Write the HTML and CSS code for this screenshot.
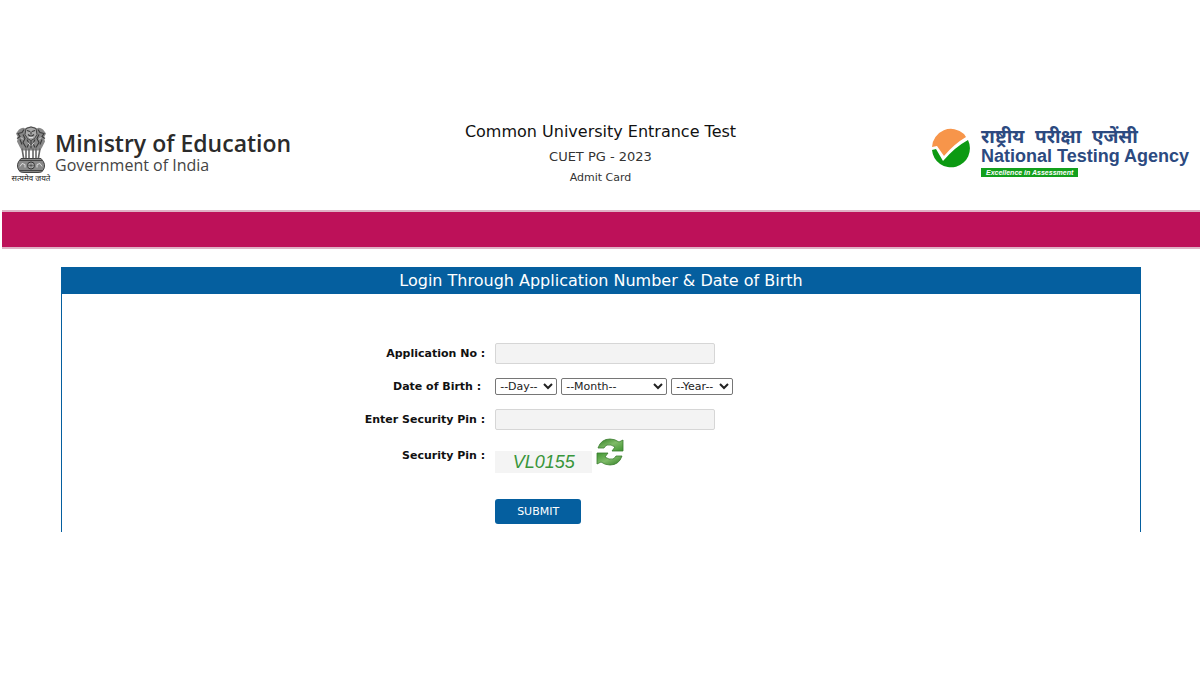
FILE: index.html
```html
<!DOCTYPE html>
<html lang="en">
<head>
    <meta charset="UTF-8">
    <meta name="viewport" content="width=device-width, initial-scale=1.0">
    <title>CUET PG - 2023 Admit Card</title>
    <link rel="stylesheet" href="styles.css">
</head>
<body>
    <header class="site-header">
        <div class="ministry">
            <div class="emblem">
                <svg width="32" height="49" viewBox="0 0 32 48" aria-hidden="true">
                    <!-- lions -->
                    <path d="M10 3 Q16 -1 22 3 Q24 1 28 4 L31 8 L29 12 L30 16 L27 22 L25 25 H7 L5 22 L2 16 L3 12 L1 8 L4 4 Q8 1 10 3Z" fill="#888"/>
                    <path d="M11 3 Q16 0 21 3 L22 9 Q20 14 16 15 Q12 14 10 9Z" fill="#aaa" stroke="#444"/>
                    <path d="M12 5 L15 6 M17 6 L20 5 M13 9 Q16 12 19 9 M16 6 V9 M9 4 L7 7 L3 8 L5 11 L2 13 M23 4 L25 7 L29 8 L27 11 L30 13 M8 9 L10 13 L8 17 L11 22 M24 9 L22 13 L24 17 L21 22 M12 14 L14 18 L12 22 M20 14 L18 18 L20 22 M16 15 V23 M5 14 L7 19 M27 14 L25 19" fill="none" stroke="#3a3a3a" stroke-width="1.1"/>
                    <path d="M6 12 L8 14 M24 14 L26 12 M14 12 L18 12 M13 17 L15 20 M19 17 L17 20" stroke="#ddd" stroke-width="1"/>
                    <!-- legs -->
                    <path d="M7 23 L9 35 M11 23 V35 M14 23 V35 M18 23 V35 M21 23 V35 M25 23 L23 35" stroke="#666" stroke-width="1.6"/>
                    <!-- abacus with the wheel -->
                    <path d="M6 33 H26 Q32 39 28 45 Q27 47 23 47 H9 Q5 47 4 45 Q0 39 6 33Z" fill="#888" stroke="#444"/>
                    <path d="M5 35 H27 M4 45 H28" stroke="#444"/>
                    <circle cx="16" cy="40" r="3.5" fill="#bbb" stroke="#333"/>
                    <path d="M16 37 V43 M13 40 H19 M14 38 L18 42 M18 38 L14 42" stroke="#444" stroke-width=".6"/>
                    <path d="M5 41 L7 38 L10 39 L10 42 M27 41 L25 38 L22 39 L22 42" fill="none" stroke="#ddd"/>
                </svg>
                <span class="motto" lang="hi">सत्यमेव जयते</span>
            </div>
            <div class="ministry-text">
                <div class="ministry-name">Ministry of Education</div>
                <div class="ministry-sub">Government of India</div>
            </div>
        </div>

        <div class="exam">
            <h1>Common University Entrance Test</h1>
            <h2>CUET PG - 2023</h2>
            <h3>Admit Card</h3>
        </div>

        <div class="agency">
            <svg width="40" height="40" viewBox="0 0 40 40" aria-hidden="true">
                <path d="M1 19 A19 19 0 0 1 33 6 L35 9 Q23 16 13 28 L6 18Z" fill="#f7954a"/>
                <path d="M1 22 L5 21 L12 33 Q24 19 37 12 A19 19 0 1 1 1 22Z" fill="#0c9a12"/>
            </svg>
            <div class="agency-text">
                <div class="agency-hindi" lang="hi">राष्ट्रीय &nbsp;परीक्षा &nbsp;एजेंसी</div>
                <div class="agency-name">National Testing Agency</div>
                <div class="agency-tag">Excellence in Assessment</div>
            </div>
        </div>
    </header>

    <div class="band"></div>

    <main class="panel">
        <h2 class="panel-title">Login Through Application Number &amp; Date of Birth</h2>
        <form class="login-form">
            <label for="appno">Application No :</label>
            <div class="field">
                <input type="text" id="appno">
            </div>

            <label for="day" class="dob-label">Date of Birth :</label>
            <div class="field">
                <select id="day" class="day"><option>--Day--</option></select>
                <select class="month" aria-label="Month"><option>--Month--</option></select>
                <select class="year" aria-label="Year"><option>--Year--</option></select>
            </div>

            <label for="pin">Enter Security Pin :</label>
            <div class="field">
                <input type="text" id="pin">
            </div>

            <div class="pin-label">Security Pin :</div>
            <div class="field captcha-row">
                <div class="captcha">VL0155</div>
                <button type="button" class="refresh" aria-label="Refresh security pin">
                    <svg width="28" height="28" viewBox="0 0 28 28">
                        <defs>
                            <linearGradient id="leaf" x1="0" y1="0" x2="1" y2="1">
                                <stop offset="0" stop-color="#2f7d22"/>
                                <stop offset=".5" stop-color="#7fbb68"/>
                                <stop offset="1" stop-color="#3f9431"/>
                            </linearGradient>
                        </defs>
                        <path id="arrow" d="M2 10 Q5 1 14 1 Q19 1 23 4 L27 2 V13 H16 L19 9 Q15 6 11 7 Q9 8 8 10Z" fill="url(#leaf)" stroke="#397b2d" stroke-width=".8"/>
                        <use href="#arrow" transform="rotate(180 14 14)"/>
                    </svg>
                </button>
            </div>

            <div class="field submit-row">
                <button type="submit" class="submit">SUBMIT</button>
            </div>
        </form>
    </main>
</body>
</html>
```

FILE: styles.css
```css
* {
    margin: 0;
    padding: 0;
    box-sizing: border-box;
}

body {
    background: #fff;
    color: #111;
    font-family: Verdana, "DejaVu Sans", sans-serif;
    font-size: 11px;
    padding: 112px 0 0 2px;
}

/* Header */
.site-header {
    display: grid;
    grid-template-columns: 1fr auto 1fr;
    align-items: start;
    min-height: 98px;
    padding: 10px 10px 0 9px;
}

.ministry {
    display: flex;
    gap: 4px;
    padding-top: 3px;
}

.emblem {
    display: flex;
    flex-direction: column;
    align-items: center;
    width: 40px;
}

.motto {
    font-family: "Noto Sans Devanagari", "Noto Sans", sans-serif;
    font-size: 8px;
    line-height: 10px;
    white-space: nowrap;
    color: #222;
}

.ministry-text {
    font-family: "Open Sans", "Noto Sans", sans-serif;
    padding-top: 5px;
    white-space: nowrap;
}

.ministry-name {
    font-size: 23px;
    font-weight: 600;
    line-height: 26px;
    color: #2b2b2b;
}

.ministry-sub {
    font-size: 16px;
    line-height: 18px;
    color: #444;
}

.exam {
    text-align: center;
}

.exam h1,
.exam h2,
.exam h3 {
    font-weight: normal;
}

.exam h1 {
    font-size: 16px;
    line-height: 20px;
}

.exam h2 {
    font-size: 13px;
    line-height: 20px;
    margin-top: 5px;
    color: #333;
}

.exam h3 {
    font-size: 11px;
    line-height: 22px;
    color: #333;
}

.agency {
    display: flex;
    gap: 10px;
    justify-content: flex-end;
    padding: 6px 1px 0 0;
}

.agency-text {
    font-family: "Liberation Sans", "Noto Sans Devanagari", sans-serif;
    font-weight: bold;
    color: #2c4a80;
    white-space: nowrap;
}

.agency-hindi {
    font-size: 19px;
    line-height: 18px;
}

.agency-name {
    font-size: 18px;
    line-height: 20px;
}

.agency-tag {
    width: fit-content;
    margin-top: 2px;
    padding: 0 5px;
    font-size: 7px;
    font-style: italic;
    line-height: 9px;
    color: #fff;
    background: #12a01c;
}

.band {
    height: 39px;
    background: #bd1159;
    border-top: 2px solid #dfb2c5;
    border-bottom: 2px solid #dfb2c5;
}

/* Login panel */
.panel {
    box-sizing: content-box;
    width: 90%;
    margin: 18px auto 0;
    border: 1px solid #055f9f;
    border-width: 0 1px;
}

.panel-title {
    font-size: 16px;
    font-weight: normal;
    line-height: 27px;
    text-align: center;
    color: #fff;
    background: #055f9f;
}

.login-form {
    display: grid;
    grid-template-columns: 40% 1fr;
    row-gap: 12px;
    align-items: center;
    padding: 49px 0 8px;
}

.login-form label,
.pin-label {
    padding-right: 8px;
    font-weight: bold;
    text-align: right;
}

.login-form .dob-label {
    padding-right: 12px;
}

.field {
    display: flex;
    align-items: center;
    gap: 4px;
    min-height: 21px;
    padding-left: 2px;
}

.field input {
    width: 220px;
    height: 21px;
    padding: 0 6px;
    font: inherit;
    background: #f3f3f3;
    border: 1px solid #d6d6d6;
    border-radius: 2px;
}

.field select {
    height: 17px;
    font-family: inherit;
    font-size: 11px;
    color: #222;
    background: #fff;
    border: 1px solid #767676;
    border-radius: 2px;
}

.day {
    width: 62px;
}

.month {
    width: 106px;
}

.year {
    width: 62px;
}

.captcha-row,
.pin-label {
    margin-top: -4px;
}

.captcha-row {
    align-items: flex-end;
    height: 35px;
}

.captcha {
    width: 97px;
    font-family: "Liberation Sans", sans-serif;
    font-size: 18px;
    font-style: italic;
    line-height: 22px;
    text-align: center;
    color: #39963b;
    background: #f4f4f4;
}

.refresh {
    align-self: flex-start;
    height: 28px;
    background: none;
    border: none;
    cursor: pointer;
}

.submit-row {
    grid-column: 2;
    margin-top: 14px;
}

.submit {
    width: 86px;
    height: 25px;
    font-family: inherit;
    font-size: 11px;
    color: #fff;
    background: #055f9f;
    border: none;
    border-radius: 3px;
    cursor: pointer;
}
```
